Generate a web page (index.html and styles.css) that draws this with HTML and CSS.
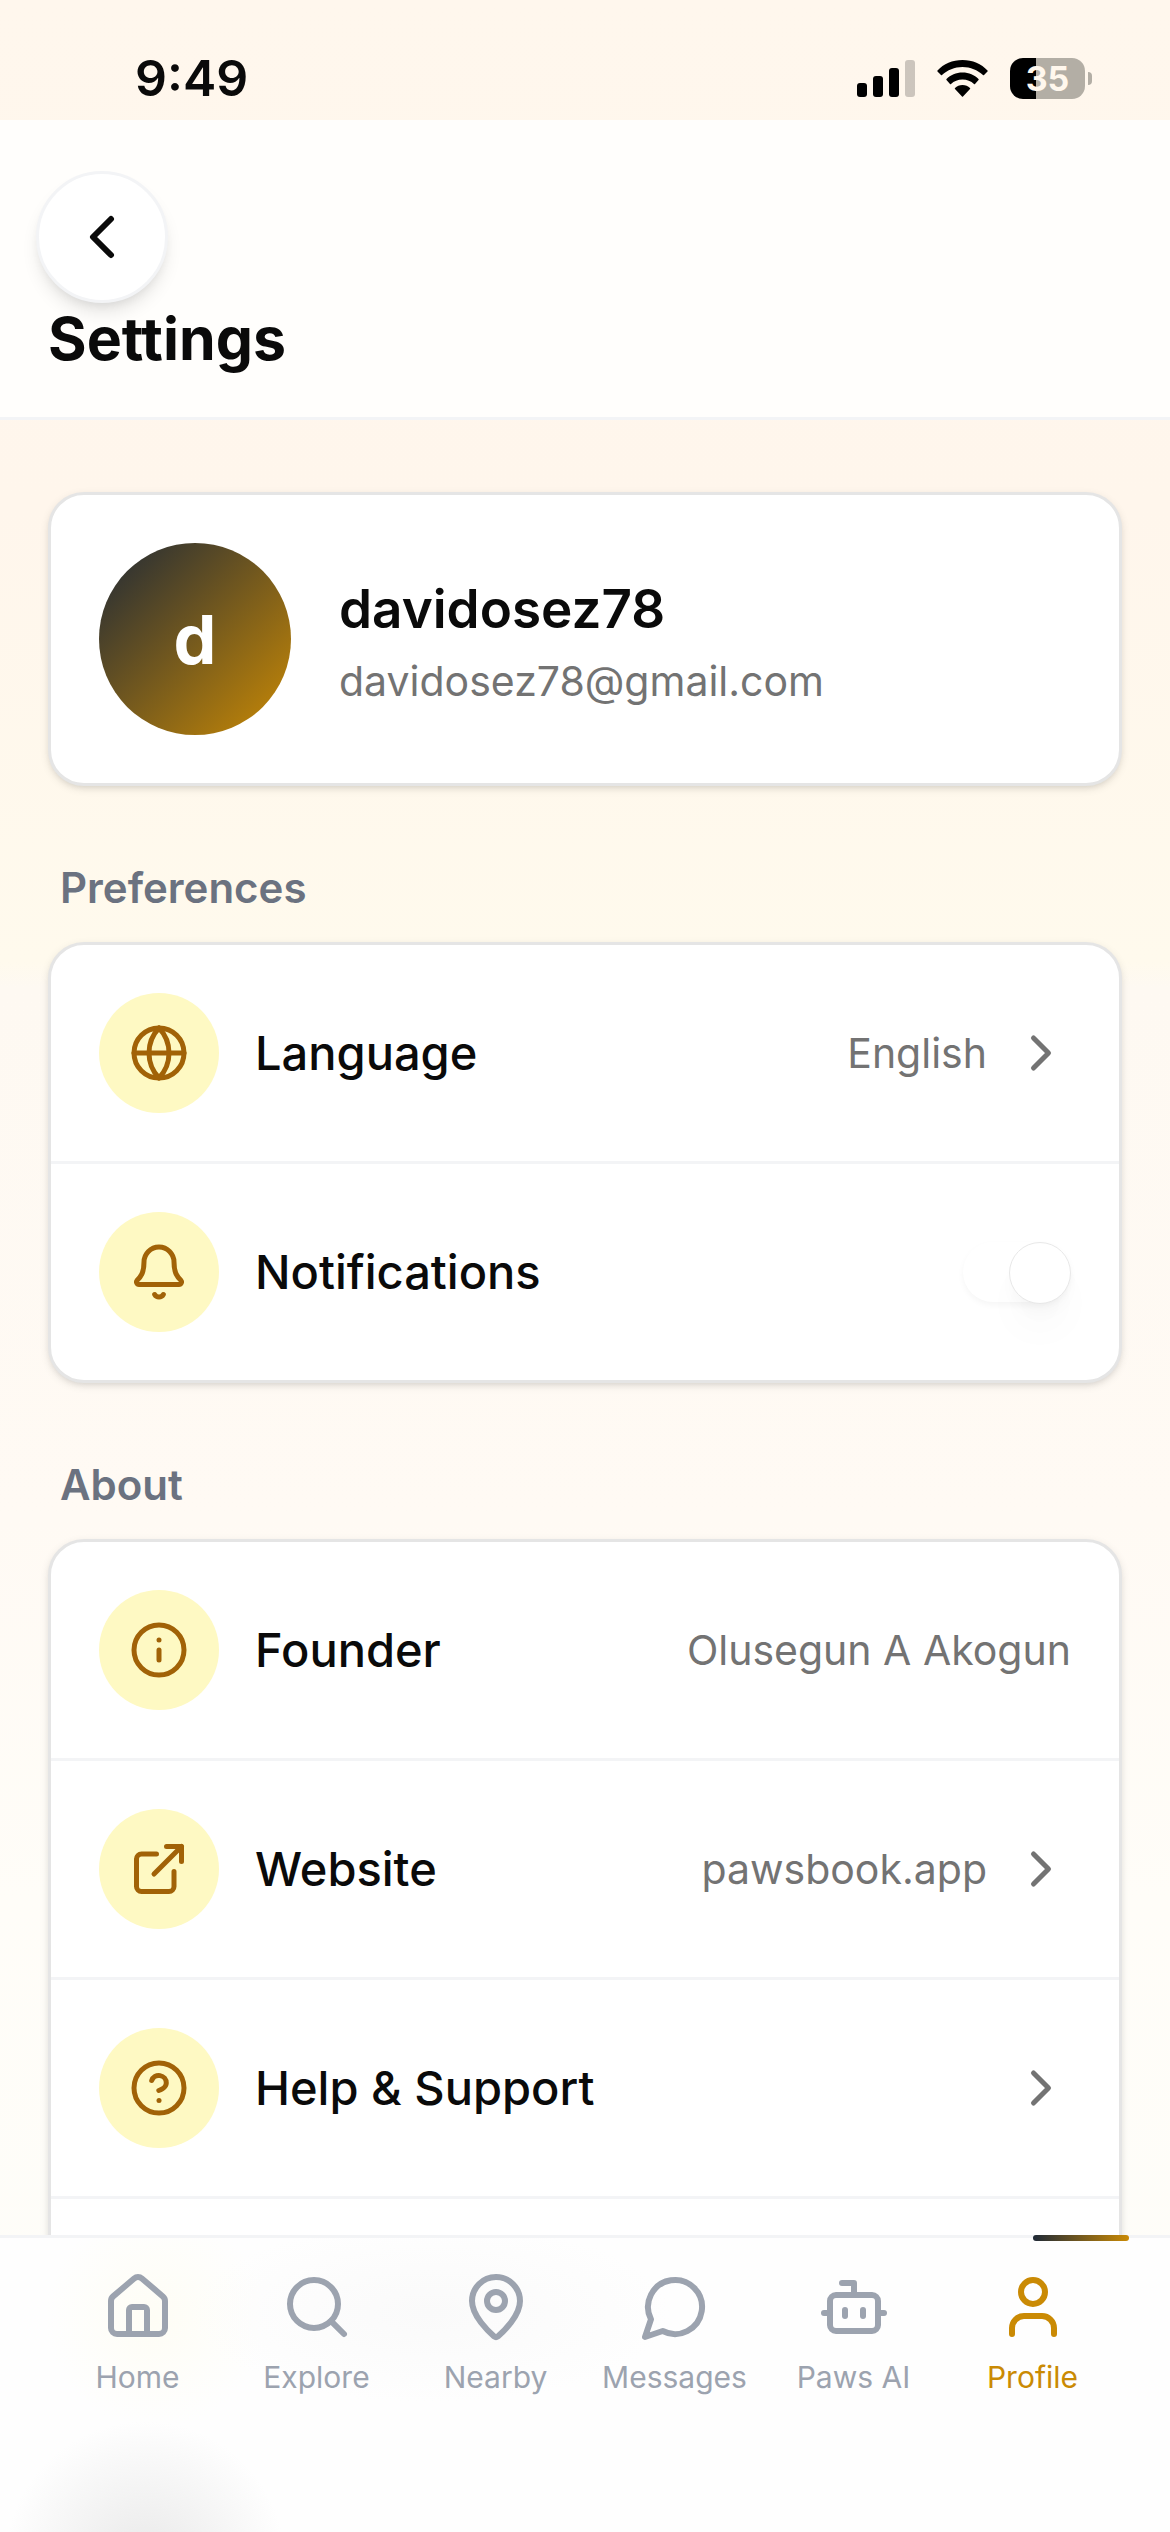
FILE: index.html
```html
<!DOCTYPE html>
<html lang="en">
<head>
  <meta charset="UTF-8" />
  <meta name="viewport" content="width=device-width, initial-scale=1.0" />
  <title>Settings</title>
  <link rel="stylesheet" href="styles.css">
</head>
<body>
  <div class="status-bar">
    <span class="time">9:49</span>
    <div class="status-icons">
      <svg class="signal" viewBox="0 0 58 38" aria-hidden="true">
        <rect x="0" y="24" width="10" height="14" rx="3" />
        <rect x="16" y="17" width="10" height="21" rx="3" />
        <rect x="32" y="9" width="10" height="29" rx="3" />
        <rect x="48" y="1" width="10" height="37" rx="3" opacity="0.2" />
      </svg>
      <svg class="wifi" viewBox="0 0 51 38" aria-hidden="true">
        <path d="M25.500 1C35.500 1 44.500 5 50.500 11.500Q51 12 50.500 12.500L47 16Q46.500 16.500 46 16C40.500 11 33.500 8 25.500 8S10.500 11 5 16Q4.500 16.500 4 16L.5 12.500Q0 12 .5 11.500C6.500 5 15.500 1 25.500 1Z" />
        <path d="M25.500 13.500C32 13.500 37.500 16 41.500 20Q42 20.500 41.500 21L38 25Q37.500 25.500 37 25C34 22 30 20.500 25.500 20.500S17 22 14 25Q13.500 25.500 13 25L9.500 21Q9 20.500 9.500 20C13.500 16 19 13.500 25.500 13.500Z" />
        <path d="M25.500 26C28.500 26 31 27 33 29Q33.500 29.500 33 30L26 37.500Q25.500 38 25 37.500L18 30Q17.500 29.500 18 29C20 27 22.500 26 25.500 26Z" />
      </svg>
      <div class="battery"><span class="battery-level">35</span></div>
    </div>
  </div>

  <header class="header">
    <button class="back-button" type="button" aria-label="Back">
      <svg class="icon icon-large" viewBox="0 0 24 24"><path d="m15 18-6-6 6-6" /></svg>
    </button>
    <h1>Settings</h1>
  </header>

  <main class="content">
    <section class="card profile">
      <div class="avatar">d</div>
      <div>
        <h2 class="profile-name">davidosez78</h2>
        <p class="profile-email">davidosez78@gmail.com</p>
      </div>
    </section>

    <section>
      <h2 class="section-title">Preferences</h2>
      <div class="card">
        <button class="row" type="button">
          <span class="row-icon">
            <svg class="icon" viewBox="0 0 24 24"><circle cx="12" cy="12" r="10" /><path d="M12 2a14.5 14.5 0 0 0 0 20 14.5 14.5 0 0 0 0-20" /><path d="M2 12h20" /></svg>
          </span>
          <span class="row-label">Language</span>
          <span class="row-value">English</span>
          <svg class="icon chevron" viewBox="0 0 24 24"><path d="m9 18 6-6-6-6" /></svg>
        </button>
        <div class="row">
          <span class="row-icon">
            <svg class="icon" viewBox="0 0 24 24"><path d="M10.268 21a2 2 0 0 0 3.464 0" /><path d="M3.262 15.326A1 1 0 0 0 4 17h16a1 1 0 0 0 .74-1.673C19.41 13.956 18 12.499 18 8A6 6 0 0 0 6 8c0 4.499-1.411 5.956-2.738 7.326" /></svg>
          </span>
          <label class="row-label" for="notifications">Notifications</label>
          <input class="toggle" id="notifications" type="checkbox" role="switch" checked />
        </div>
      </div>
    </section>

    <section>
      <h2 class="section-title">About</h2>
      <div class="card">
        <div class="row">
          <span class="row-icon">
            <svg class="icon" viewBox="0 0 24 24"><circle cx="12" cy="12" r="10" /><path d="M12 16v-4" /><path d="M12 8h.01" /></svg>
          </span>
          <span class="row-label">Founder</span>
          <span class="row-value">Olusegun A Akogun</span>
        </div>
        <a class="row" href="#">
          <span class="row-icon">
            <svg class="icon" viewBox="0 0 24 24"><path d="M15 3h6v6" /><path d="M10 14 21 3" /><path d="M18 13v6a2 2 0 0 1-2 2H5a2 2 0 0 1-2-2V8a2 2 0 0 1 2-2h6" /></svg>
          </span>
          <span class="row-label">Website</span>
          <span class="row-value">pawsbook.app</span>
          <svg class="icon chevron" viewBox="0 0 24 24"><path d="m9 18 6-6-6-6" /></svg>
        </a>
        <a class="row" href="#">
          <span class="row-icon">
            <svg class="icon" viewBox="0 0 24 24"><circle cx="12" cy="12" r="10" /><path d="M9.090 9a3 3 0 0 1 5.830 1c0 2-3 3-3 3" /><path d="M12 17h.01" /></svg>
          </span>
          <span class="row-label">Help &amp; Support</span>
          <svg class="icon chevron" viewBox="0 0 24 24"><path d="m9 18 6-6-6-6" /></svg>
        </a>
        <div class="row"></div>
      </div>
    </section>
  </main>

  <nav class="tab-bar">
    <a class="tab" href="#">
      <svg class="icon icon-large" viewBox="0 0 24 24"><path d="M15 21v-8a1 1 0 0 0-1-1h-4a1 1 0 0 0-1 1v8" /><path d="M3 10a2 2 0 0 1 .709-1.528l7-5.999a2 2 0 0 1 2.582 0l7 5.999A2 2 0 0 1 21 10v9a2 2 0 0 1-2 2H5a2 2 0 0 1-2-2z" /></svg>
      <span>Home</span>
    </a>
    <a class="tab" href="#">
      <svg class="icon icon-large" viewBox="0 0 24 24"><circle cx="11" cy="11" r="8" /><path d="m21 21-4.300-4.300" /></svg>
      <span>Explore</span>
    </a>
    <a class="tab" href="#">
      <svg class="icon icon-large" viewBox="0 0 24 24"><path d="M20 10c0 4.993-5.539 10.193-7.399 11.799a1 1 0 0 1-1.202 0C9.539 20.193 4 14.993 4 10a8 8 0 0 1 16 0" /><circle cx="12" cy="10" r="3" /></svg>
      <span>Nearby</span>
    </a>
    <a class="tab" href="#">
      <svg class="icon icon-large" viewBox="0 0 24 24"><path d="M7.900 20A9 9 0 1 0 4 16.100L2 22Z" /></svg>
      <span>Messages</span>
    </a>
    <a class="tab" href="#">
      <svg class="icon icon-large" viewBox="0 0 24 24"><path d="M12 8V4H8" /><rect width="16" height="12" x="4" y="8" rx="2" /><path d="M2 14h2" /><path d="M20 14h2" /><path d="M15 13v2" /><path d="M9 13v2" /></svg>
      <span>Paws AI</span>
    </a>
    <a class="tab active" href="#" aria-current="page">
      <svg class="icon icon-large" viewBox="0 0 24 24"><path d="M19 21v-2a4 4 0 0 0-4-4H9a4 4 0 0 0-4 4v2" /><circle cx="12" cy="7" r="4" /></svg>
      <span>Profile</span>
    </a>
  </nav>
</body>
</html>
```

FILE: styles.css
```css
* {
  box-sizing: border-box;
}

body {
  margin: 0;
  height: 100vh;
  display: flex;
  flex-direction: column;
  overflow: hidden;
  background: linear-gradient(180deg, #fff7ed 0%, #fff6ec 20%, #fffaed 38%, #fef9f2 39%, #fffaf4 60%, #fffdf8 75%, #fdfdf9 100%);
  color: #0a0a0a;
  font-family: Inter, "Liberation Sans", sans-serif;
}

h1,
h2,
p {
  margin: 0;
}

a {
  color: inherit;
  text-decoration: none;
}

.icon {
  width: 60px;
  height: 60px;
  flex: none;
  fill: none;
  stroke: currentColor;
  stroke-width: 2;
  stroke-linecap: round;
  stroke-linejoin: round;
}

.icon-large {
  width: 72px;
  height: 72px;
}

/* status bar */
.status-bar {
  height: 120px;
  flex: none;
  display: flex;
  justify-content: space-between;
  align-items: flex-end;
  padding: 0 78px 12px 135px;
}

.time {
  font-size: 50px;
  font-weight: 600;
  line-height: 60px;
}

.status-icons {
  display: flex;
  align-items: center;
  gap: 22px;
  height: 60px;
}

.signal {
  width: 58px;
  height: 38px;
}

.wifi {
  width: 51px;
  height: 38px;
}

.battery {
  position: relative;
  width: 75px;
  height: 41px;
  margin-right: 7px;
  border-radius: 13px;
  background: linear-gradient(90deg, #000 35%, #b3aea5 35%);
  color: #fff7ed;
  font-size: 34px;
  font-weight: 700;
  line-height: 41px;
  text-align: center;
}

.battery::after {
  content: "";
  position: absolute;
  top: 14px;
  right: -7px;
  width: 4px;
  height: 13px;
  border-radius: 0 4px 4px 0;
  background: #b3aea5;
}

/* header */
.header {
  flex: none;
  padding: 51px 36px 42px;
  border-bottom: 3px solid #f3f4f6;
  background: #fffefc;
}

.back-button {
  display: flex;
  align-items: center;
  justify-content: center;
  width: 132px;
  height: 132px;
  padding: 0;
  border: 3px solid #f3f4f6;
  border-radius: 50%;
  background: #fff;
  color: #0a0a0a;
  box-shadow: 0 12px 18px -3px rgba(0, 0, 0, 0.1), 0 6px 12px -6px rgba(0, 0, 0, 0.1);
  cursor: pointer;
}

.header h1 {
  padding-left: 12px;
  font-size: 59px;
  font-weight: 700;
  line-height: 72px;
}

/* content */
.content {
  flex: 1;
  min-height: 0;
  display: flex;
  flex-direction: column;
  gap: 72px;
  padding: 72px 48px 0;
  overflow: hidden;
}

.card {
  border: 3px solid #e5e5e5;
  border-radius: 36px;
  background: #fff;
  box-shadow: 0 3px 9px rgba(0, 0, 0, 0.1), 0 3px 6px -3px rgba(0, 0, 0, 0.1);
}

.profile {
  display: flex;
  align-items: center;
  gap: 48px;
  padding: 48px;
}

.avatar {
  display: flex;
  align-items: center;
  justify-content: center;
  width: 192px;
  height: 192px;
  border-radius: 50%;
  background: linear-gradient(135deg, #1f2937, #ca8a04);
  color: #fff;
  font-size: 68px;
  font-weight: 700;
}

.profile-name {
  font-size: 53px;
  font-weight: 600;
  line-height: 84px;
}

.profile-email {
  color: #737373;
  font-size: 41px;
  line-height: 60px;
}

.section-title {
  margin-bottom: 24px;
  padding-left: 12px;
  color: #6b7280;
  font-size: 42px;
  font-weight: 600;
  line-height: 60px;
}

.row {
  display: flex;
  align-items: center;
  width: 100%;
  min-height: 216px;
  padding: 48px;
  border: none;
  background: none;
  font-family: inherit;
  text-align: left;
  color: #0a0a0a;
}

.row:not(:last-child) {
  border-bottom: 3px solid #f3f4f6;
}

.row-icon {
  display: flex;
  align-items: center;
  justify-content: center;
  width: 120px;
  height: 120px;
  margin-right: 36px;
  border-radius: 50%;
  background: #fef9c3;
  color: #a16207;
}

.row-label {
  flex: 1;
  font-size: 47px;
  font-weight: 500;
  line-height: 72px;
}

.row-value {
  color: #737373;
  font-size: 41px;
  line-height: 60px;
}

.chevron {
  margin-left: 24px;
  color: #737373;
}

.toggle {
  appearance: none;
  display: flex;
  justify-content: flex-end;
  width: 108px;
  height: 60px;
  margin: 0;
  border-radius: 30px;
  background: #fff;
  box-shadow: 0 3px 6px rgba(0, 0, 0, 0.04);
}

.toggle::before {
  content: "";
  width: 60px;
  height: 60px;
  border: 1px solid #e8e8e8;
  border-radius: 50%;
  background: #fff;
  box-shadow: 0 30px 45px -9px rgba(0, 0, 0, 0.04), 0 12px 18px -6px rgba(0, 0, 0, 0.04);
}

/* bottom navigation */
.tab-bar {
  flex: none;
  display: grid;
  grid-template-columns: repeat(6, 1fr);
  align-items: start;
  height: 297px;
  padding: 33px 48px 0;
  border-top: 3px solid #f3f4f6;
  background:
    radial-gradient(circle 140px at 145px 110%, #e9e9e9, transparent),
    radial-gradient(ellipse 240px 90px at 430px 75px, #fafafa, transparent),
    radial-gradient(circle 110px at 155px 80px, #fefdf5, transparent),
    #fefefe;
}

.tab {
  position: relative;
  display: flex;
  flex-direction: column;
  align-items: center;
  gap: 12px;
  color: #9ca3af;
  font-size: 30px;
  line-height: 44px;
}

.tab.active {
  color: #ca8a04;
}

.tab.active::before {
  content: "";
  position: absolute;
  top: -36px;
  left: 50%;
  width: 96px;
  height: 6px;
  border-radius: 3px;
  background: linear-gradient(90deg, #1f2937, #ca8a04);
}
```
